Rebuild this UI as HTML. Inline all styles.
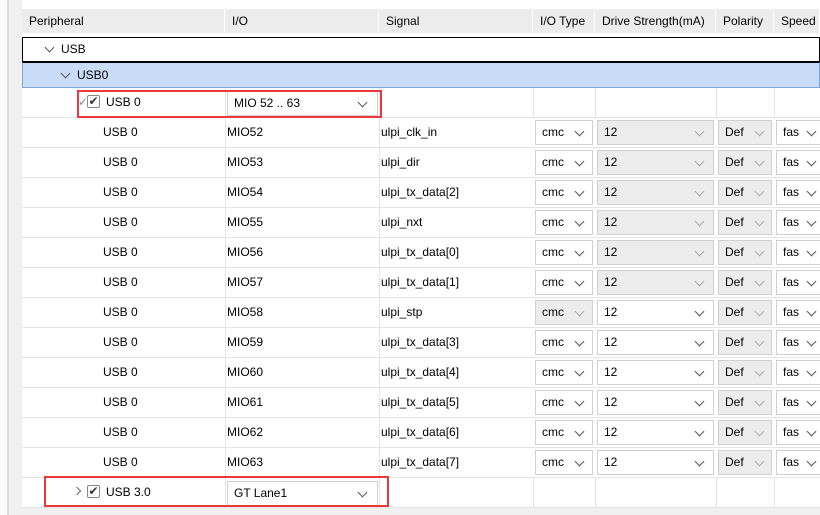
<!DOCTYPE html><html><head><style>
body{margin:0;width:820px;height:515px;overflow:hidden;background:#f0f0f0;font-family:"Liberation Sans",Arial,sans-serif;font-size:12px;color:#000;position:relative}
.a{position:absolute}
.hd{position:absolute;top:9px;height:24px;background:#ececec;line-height:24px;padding-left:7px;box-sizing:border-box;border-right:1px solid #fff}
.row{position:absolute;left:22px;width:798px;height:30px;background:#fff;border-bottom:1px solid #e4e4e4;box-sizing:border-box}
.c{position:absolute;top:0;height:29px;line-height:29px}
.v{position:absolute;top:0;width:1px;height:30px;background:#e4e4e4}
.dd{position:absolute;top:2px;height:25px;box-sizing:border-box;border:1px solid #d0d0d0;line-height:23px;padding-left:6px;background:#fff;overflow:hidden}
.g{background:#ececec}
.ch{position:absolute;width:6px;height:6px;border-right:1.5px solid #555;border-bottom:1.5px solid #555;transform:rotate(45deg)}
.gc{border-color:#aaa}
</style></head><body>
<div class="a" style="left:0;top:0;width:7px;height:515px;background:#fafafa"></div>
<div class="a" style="left:7px;top:0;width:2px;height:515px;background:#dcdcdc"></div>
<div class="a" style="left:82px;top:-2px;width:261px;height:6px;border:1px solid #c8c8c8;background:#fff"></div>
<div class="a" style="left:22px;top:0;width:798px;height:9px;background:#fff"></div>
<div class="hd" style="left:22px;width:203px">Peripheral</div>
<div class="hd" style="left:225px;width:154px">I/O</div>
<div class="hd" style="left:379px;width:154px">Signal</div>
<div class="hd" style="left:533px;width:62px">I/O Type</div>
<div class="hd" style="left:595px;width:121px">Drive Strength(mA)</div>
<div class="hd" style="left:716px;width:58px">Polarity</div>
<div class="hd" style="left:774px;width:46px">Speed</div>
<div class="a" style="left:22px;top:33px;width:798px;height:4px;background:#fff"></div>
<div class="a" style="left:22px;top:37px;width:798px;height:25px;background:#fff;border:1px solid #000;box-sizing:border-box"></div>
<div class="ch" style="left:46px;top:44px"></div><div class="a" style="left:61px;top:37px;line-height:25px">USB</div>
<div class="a" style="left:22px;top:62px;width:798px;height:26px;background:#c9dcf7;border:1px solid #7da7d9;border-top:1px solid #000;box-sizing:border-box"></div>
<div class="ch" style="left:62px;top:70px"></div><div class="a" style="left:77px;top:62px;line-height:26px">USB0</div>

<div class="row" style="top:88px">
<div class="v" style="left:203px"></div><div class="v" style="left:357px"></div><div class="v" style="left:511px"></div><div class="v" style="left:573px"></div><div class="v" style="left:694px"></div><div class="v" style="left:752px"></div>
</div>
<div class="a" style="left:78px;top:95px;color:#888">✓</div>
<div class="a" style="left:87px;top:95px;width:13px;height:13px;border:1px solid #888;border-radius:2px;background:#fff;box-sizing:border-box;font-size:12px;line-height:11px;text-align:center;color:#333">✔</div>
<div class="a" style="left:106px;top:88px;line-height:29px">USB 0</div>
<div class="dd" style="left:227px;top:91px;width:151px">MIO 52 .. 63</div><div class="ch" style="left:359px;top:99px"></div>
<div class="a" style="left:77px;top:90px;width:305px;height:28px;border:2px solid #e83a3a;box-sizing:border-box"></div>

<!-- data rows -->
<div id="rows"></div>
<div class="row" style="top:118px"><div class="c" style="left:81px">USB 0</div><div class="c" style="left:205px">MIO52</div><div class="c" style="left:359px">ulpi_clk_in</div><div class="v" style="left:203px"></div><div class="v" style="left:357px"></div><div class="dd" style="left:513px;width:58px">cmc</div><div class="ch" style="left:554px;top:10px"></div><div class="dd g" style="left:575px;width:117px">12</div><div class="ch gc" style="left:674px;top:10px"></div><div class="dd g" style="left:696px;width:54px">Def</div><div class="ch gc" style="left:734px;top:10px"></div><div class="dd" style="left:754px;width:50px">fas</div><div class="ch" style="left:786px;top:10px"></div></div>
<div class="row" style="top:148px"><div class="c" style="left:81px">USB 0</div><div class="c" style="left:205px">MIO53</div><div class="c" style="left:359px">ulpi_dir</div><div class="v" style="left:203px"></div><div class="v" style="left:357px"></div><div class="dd" style="left:513px;width:58px">cmc</div><div class="ch" style="left:554px;top:10px"></div><div class="dd g" style="left:575px;width:117px">12</div><div class="ch gc" style="left:674px;top:10px"></div><div class="dd g" style="left:696px;width:54px">Def</div><div class="ch gc" style="left:734px;top:10px"></div><div class="dd" style="left:754px;width:50px">fas</div><div class="ch" style="left:786px;top:10px"></div></div>
<div class="row" style="top:178px"><div class="c" style="left:81px">USB 0</div><div class="c" style="left:205px">MIO54</div><div class="c" style="left:359px">ulpi_tx_data[2]</div><div class="v" style="left:203px"></div><div class="v" style="left:357px"></div><div class="dd" style="left:513px;width:58px">cmc</div><div class="ch" style="left:554px;top:10px"></div><div class="dd g" style="left:575px;width:117px">12</div><div class="ch gc" style="left:674px;top:10px"></div><div class="dd g" style="left:696px;width:54px">Def</div><div class="ch gc" style="left:734px;top:10px"></div><div class="dd" style="left:754px;width:50px">fas</div><div class="ch" style="left:786px;top:10px"></div></div>
<div class="row" style="top:208px"><div class="c" style="left:81px">USB 0</div><div class="c" style="left:205px">MIO55</div><div class="c" style="left:359px">ulpi_nxt</div><div class="v" style="left:203px"></div><div class="v" style="left:357px"></div><div class="dd" style="left:513px;width:58px">cmc</div><div class="ch" style="left:554px;top:10px"></div><div class="dd g" style="left:575px;width:117px">12</div><div class="ch gc" style="left:674px;top:10px"></div><div class="dd g" style="left:696px;width:54px">Def</div><div class="ch gc" style="left:734px;top:10px"></div><div class="dd" style="left:754px;width:50px">fas</div><div class="ch" style="left:786px;top:10px"></div></div>
<div class="row" style="top:238px"><div class="c" style="left:81px">USB 0</div><div class="c" style="left:205px">MIO56</div><div class="c" style="left:359px">ulpi_tx_data[0]</div><div class="v" style="left:203px"></div><div class="v" style="left:357px"></div><div class="dd" style="left:513px;width:58px">cmc</div><div class="ch" style="left:554px;top:10px"></div><div class="dd g" style="left:575px;width:117px">12</div><div class="ch gc" style="left:674px;top:10px"></div><div class="dd g" style="left:696px;width:54px">Def</div><div class="ch gc" style="left:734px;top:10px"></div><div class="dd" style="left:754px;width:50px">fas</div><div class="ch" style="left:786px;top:10px"></div></div>
<div class="row" style="top:268px"><div class="c" style="left:81px">USB 0</div><div class="c" style="left:205px">MIO57</div><div class="c" style="left:359px">ulpi_tx_data[1]</div><div class="v" style="left:203px"></div><div class="v" style="left:357px"></div><div class="dd" style="left:513px;width:58px">cmc</div><div class="ch" style="left:554px;top:10px"></div><div class="dd g" style="left:575px;width:117px">12</div><div class="ch gc" style="left:674px;top:10px"></div><div class="dd g" style="left:696px;width:54px">Def</div><div class="ch gc" style="left:734px;top:10px"></div><div class="dd" style="left:754px;width:50px">fas</div><div class="ch" style="left:786px;top:10px"></div></div>
<div class="row" style="top:298px"><div class="c" style="left:81px">USB 0</div><div class="c" style="left:205px">MIO58</div><div class="c" style="left:359px">ulpi_stp</div><div class="v" style="left:203px"></div><div class="v" style="left:357px"></div><div class="dd g" style="left:513px;width:58px">cmc</div><div class="ch gc" style="left:554px;top:10px"></div><div class="dd" style="left:575px;width:117px">12</div><div class="ch" style="left:674px;top:10px"></div><div class="dd g" style="left:696px;width:54px">Def</div><div class="ch gc" style="left:734px;top:10px"></div><div class="dd" style="left:754px;width:50px">fas</div><div class="ch" style="left:786px;top:10px"></div></div>
<div class="row" style="top:328px"><div class="c" style="left:81px">USB 0</div><div class="c" style="left:205px">MIO59</div><div class="c" style="left:359px">ulpi_tx_data[3]</div><div class="v" style="left:203px"></div><div class="v" style="left:357px"></div><div class="dd" style="left:513px;width:58px">cmc</div><div class="ch" style="left:554px;top:10px"></div><div class="dd" style="left:575px;width:117px">12</div><div class="ch" style="left:674px;top:10px"></div><div class="dd g" style="left:696px;width:54px">Def</div><div class="ch gc" style="left:734px;top:10px"></div><div class="dd" style="left:754px;width:50px">fas</div><div class="ch" style="left:786px;top:10px"></div></div>
<div class="row" style="top:358px"><div class="c" style="left:81px">USB 0</div><div class="c" style="left:205px">MIO60</div><div class="c" style="left:359px">ulpi_tx_data[4]</div><div class="v" style="left:203px"></div><div class="v" style="left:357px"></div><div class="dd" style="left:513px;width:58px">cmc</div><div class="ch" style="left:554px;top:10px"></div><div class="dd" style="left:575px;width:117px">12</div><div class="ch" style="left:674px;top:10px"></div><div class="dd g" style="left:696px;width:54px">Def</div><div class="ch gc" style="left:734px;top:10px"></div><div class="dd" style="left:754px;width:50px">fas</div><div class="ch" style="left:786px;top:10px"></div></div>
<div class="row" style="top:388px"><div class="c" style="left:81px">USB 0</div><div class="c" style="left:205px">MIO61</div><div class="c" style="left:359px">ulpi_tx_data[5]</div><div class="v" style="left:203px"></div><div class="v" style="left:357px"></div><div class="dd" style="left:513px;width:58px">cmc</div><div class="ch" style="left:554px;top:10px"></div><div class="dd" style="left:575px;width:117px">12</div><div class="ch" style="left:674px;top:10px"></div><div class="dd g" style="left:696px;width:54px">Def</div><div class="ch gc" style="left:734px;top:10px"></div><div class="dd" style="left:754px;width:50px">fas</div><div class="ch" style="left:786px;top:10px"></div></div>
<div class="row" style="top:418px"><div class="c" style="left:81px">USB 0</div><div class="c" style="left:205px">MIO62</div><div class="c" style="left:359px">ulpi_tx_data[6]</div><div class="v" style="left:203px"></div><div class="v" style="left:357px"></div><div class="dd" style="left:513px;width:58px">cmc</div><div class="ch" style="left:554px;top:10px"></div><div class="dd" style="left:575px;width:117px">12</div><div class="ch" style="left:674px;top:10px"></div><div class="dd g" style="left:696px;width:54px">Def</div><div class="ch gc" style="left:734px;top:10px"></div><div class="dd" style="left:754px;width:50px">fas</div><div class="ch" style="left:786px;top:10px"></div></div>
<div class="row" style="top:448px"><div class="c" style="left:81px">USB 0</div><div class="c" style="left:205px">MIO63</div><div class="c" style="left:359px">ulpi_tx_data[7]</div><div class="v" style="left:203px"></div><div class="v" style="left:357px"></div><div class="dd" style="left:513px;width:58px">cmc</div><div class="ch" style="left:554px;top:10px"></div><div class="dd" style="left:575px;width:117px">12</div><div class="ch" style="left:674px;top:10px"></div><div class="dd g" style="left:696px;width:54px">Def</div><div class="ch gc" style="left:734px;top:10px"></div><div class="dd" style="left:754px;width:50px">fas</div><div class="ch" style="left:786px;top:10px"></div></div>
<div class="row" style="top:478px">
<div class="v" style="left:203px"></div><div class="v" style="left:357px"></div><div class="v" style="left:511px"></div><div class="v" style="left:573px"></div><div class="v" style="left:694px"></div><div class="v" style="left:752px"></div>
</div>
<div class="a" style="left:74px;top:488px;width:5px;height:5px;border-right:1.5px solid #666;border-top:1.5px solid #666;transform:rotate(45deg)"></div>
<div class="a" style="left:87px;top:485px;width:13px;height:13px;border:1px solid #888;border-radius:2px;background:#fff;box-sizing:border-box;font-size:12px;line-height:11px;text-align:center;color:#333">✔</div>
<div class="a" style="left:106px;top:478px;line-height:29px">USB 3.0</div>
<div class="dd" style="left:227px;top:481px;width:151px">GT Lane1</div><div class="ch" style="left:359px;top:489px"></div>
<div class="a" style="left:44px;top:476px;width:345px;height:31px;border:2px solid #e83a3a;box-sizing:border-box"></div>
</body></html>
